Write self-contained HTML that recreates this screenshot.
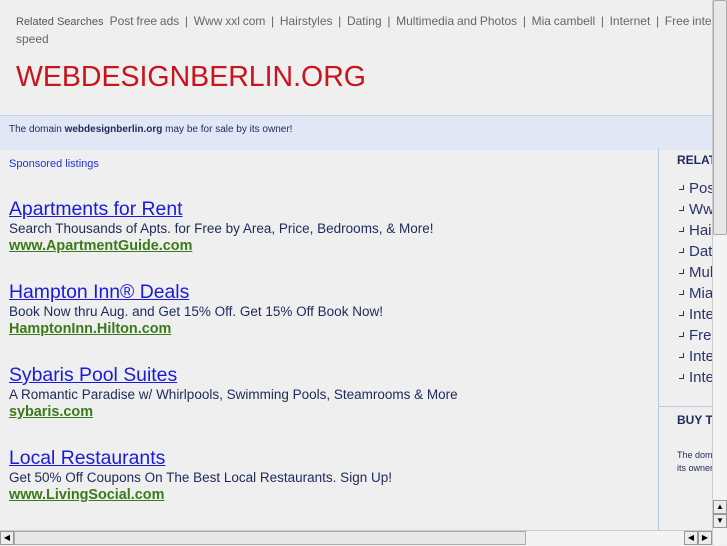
<html><head><style>
body{margin:0;width:727px;height:545px;background:#efefef;font-family:"Liberation Sans",sans-serif;overflow:hidden;position:relative}
.a{position:absolute;white-space:nowrap}
.top{left:16px;top:14px;font-size:11px;color:#555}
.top span{color:#666;font-size:12px;word-spacing:-0.5px}
.ad{position:absolute;left:9px;white-space:nowrap}
.ad .t{font-size:19.4px;color:#1a1adb;text-decoration:underline;line-height:22px}
.ad .d{font-size:13.5px;color:#1e2a5a;line-height:17px}
.ad .u{font-size:14.4px;color:#3a7a1a;font-weight:bold;text-decoration:underline;line-height:18px}
.rel{left:679px;font-size:15px;color:#2a3366}
.rel:before{content:"";display:inline-block;width:4px;height:4px;border-right:1px solid #2a3366;border-bottom:1px solid #2a3366;margin-right:5px;vertical-align:3px}
</style></head><body>
<div class="a top">Related Searches&nbsp;&nbsp;<span>Post free ads &nbsp;|&nbsp; Www xxl com &nbsp;|&nbsp; Hairstyles &nbsp;|&nbsp; Dating &nbsp;|&nbsp; Multimedia and Photos &nbsp;|&nbsp; Mia cambell &nbsp;|&nbsp; Internet &nbsp;|&nbsp; Free internet</span></div>
<div class="a" style="left:16px;top:32px;font-size:12px;color:#666">speed</div>
<div class="a" style="left:16px;top:61px;font-size:28.5px;color:#c8141a">WEBDESIGNBERLIN.ORG</div>
<div class="a" style="left:0;top:115px;width:712px;height:34px;background:#e1e7f5;border-top:1px solid #c5cfe6"></div>
<div class="a" style="left:9px;top:124px;font-size:10px;color:#1e2a5a">The domain <b>webdesignberlin.org</b> may be for sale by its owner!</div>
<div class="a" style="left:9px;top:158px;font-size:11px;color:#2233dd">Sponsored listings</div>
<div class="ad" style="top:198px"><div class="t">Apartments for Rent</div><div class="d">Search Thousands of Apts. for Free by Area, Price, Bedrooms, &amp; More!</div><div class="u">www.ApartmentGuide.com</div></div>
<div class="ad" style="top:281px"><div class="t">Hampton Inn® Deals</div><div class="d">Book Now thru Aug. and Get 15% Off. Get 15% Off Book Now!</div><div class="u">HamptonInn.Hilton.com</div></div>
<div class="ad" style="top:364px"><div class="t">Sybaris Pool Suites</div><div class="d">A Romantic Paradise w/ Whirlpools, Swimming Pools, Steamrooms &amp; More</div><div class="u">sybaris.com</div></div>
<div class="ad" style="top:447px"><div class="t">Local Restaurants</div><div class="d">Get 50% Off Coupons On The Best Local Restaurants. Sign Up!</div><div class="u">www.LivingSocial.com</div></div>
<div class="a" style="left:658px;top:148px;width:1px;height:382px;background:#b8c8e8"></div>
<div class="a" style="left:659px;top:406px;width:53px;height:1px;background:#b8c8e8"></div>
<div class="a" style="left:677px;top:153px;font-size:12px;font-weight:bold;color:#1e2a5a">RELATED</div>
<div class="a rel" style="top:180px">Post</div>
<div class="a rel" style="top:201px">Www</div>
<div class="a rel" style="top:222px">Hair</div>
<div class="a rel" style="top:243px">Dat</div>
<div class="a rel" style="top:264px">Mul</div>
<div class="a rel" style="top:285px">Mia</div>
<div class="a rel" style="top:306px">Inte</div>
<div class="a rel" style="top:327px">Free</div>
<div class="a rel" style="top:348px">Inte</div>
<div class="a rel" style="top:369px">Inte</div>
<div class="a" style="left:677px;top:413px;font-size:12px;font-weight:bold;color:#1e2a5a">BUY THIS</div>
<div class="a" style="left:677px;top:449px;font-size:9px;color:#1e2a5a;line-height:13px">The domain<br>its owner</div>
<div class="a" style="left:712px;top:0;width:15px;height:545px;background:#f3f3f3;border-left:1px solid #ccc"></div>
<div class="a" style="left:713px;top:0;width:14px;height:235px;background:#e8e8e8;border:1px solid #aaa;box-sizing:border-box;border-radius:2px"></div>
<div class="a" style="left:713px;top:500px;width:14px;height:14px;background:#ececec;border:1px solid #999;box-sizing:border-box;font-size:8px;text-align:center;line-height:12px">▲</div>
<div class="a" style="left:713px;top:514px;width:14px;height:14px;background:#ececec;border:1px solid #999;box-sizing:border-box;font-size:8px;text-align:center;line-height:12px">▼</div>
<div class="a" style="left:0;top:530px;width:712px;height:15px;background:#f3f3f3;border-top:1px solid #ccc"></div>
<div class="a" style="left:0;top:531px;width:14px;height:14px;background:#ececec;border:1px solid #999;box-sizing:border-box;font-size:8px;text-align:center;line-height:12px">◀</div>
<div class="a" style="left:14px;top:531px;width:512px;height:14px;background:#e8e8e8;border:1px solid #aaa;box-sizing:border-box"></div>
<div class="a" style="left:684px;top:531px;width:14px;height:14px;background:#ececec;border:1px solid #999;box-sizing:border-box;font-size:8px;text-align:center;line-height:12px">◀</div>
<div class="a" style="left:698px;top:531px;width:14px;height:14px;background:#ececec;border:1px solid #999;box-sizing:border-box;font-size:8px;text-align:center;line-height:12px">▶</div>
</body></html>
